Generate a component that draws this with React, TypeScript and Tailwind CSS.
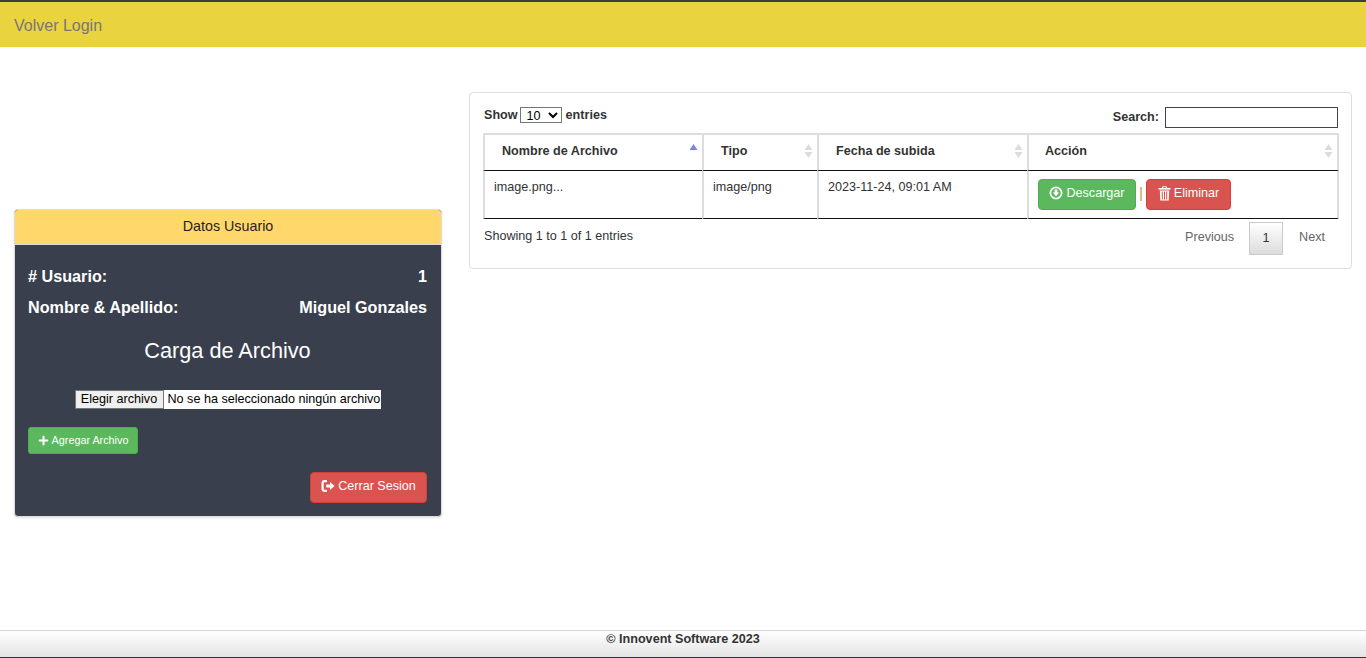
import React from "react";
import { FaPlus } from "react-icons/fa";

const Sort = ({ active = false }: { active?: boolean }) => (
  <svg width="9" height="16" viewBox="0 0 9 16" className="shrink-0">
    <path d="M4.5 1 L8.5 7 H0.5 Z" fill={active ? "#7f85dc" : "#dcdcdc"} />
    {!active && <path d="M4.5 15 L8.5 9 H0.5 Z" fill="#dcdcdc" />}
  </svg>
);

const Th = ({ label, w, active, last }: { label: string; w: string; active?: boolean; last?: boolean }) => (
  <th className={`${w} h-[38px] border-l-2 border-t-2 border-[#dddddd] border-b border-b-[#111111] p-0 text-left align-middle text-[12.6px] font-bold text-[#333333] ${last ? "border-r-2 border-r-[#dddddd]" : ""}`}>
    <div className={`flex items-center justify-between pb-[2px] pr-[4px] ${last ? "pl-[16px]" : "pl-[17px]"}`}>
      <span>{label}</span>
      <Sort active={active} />
    </div>
  </th>
);

const DownloadIcon = () => (
  <svg width="14" height="14" viewBox="0 0 14 14" className="shrink-0">
    <circle cx="7" cy="7" r="5.6" fill="none" stroke="white" strokeWidth="1.7" />
    <path d="M5.6 3.4 H8.4 V6.6 H10.2 L7 10.2 L3.8 6.6 H5.6 Z" fill="white" />
  </svg>
);

const TrashIcon = () => (
  <svg width="13" height="15" viewBox="0 0 13 15" className="shrink-0">
    <path d="M4.5 2 V0.8 H8.5 V2" fill="none" stroke="white" strokeWidth="1" />
    <rect x="0.5" y="2" width="12" height="1.6" fill="white" />
    <path d="M1.8 4.4 H11.2 L10.7 14.5 H2.3 Z" fill="white" />
    <path d="M4.3 5.5 V13.5 M6.5 5.5 V13.5 M8.7 5.5 V13.5" stroke="#d9534f" strokeWidth="1" />
  </svg>
);

const LogoutIcon = () => (
  <svg width="14" height="14" viewBox="0 0 14 14" className="shrink-0">
    <path d="M6 2.2 H3.6 Q1.6 2.2 1.6 4.2 V9.8 Q1.6 11.8 3.6 11.8 H6" fill="none" stroke="white" strokeWidth="2.2" />
    <path d="M5.2 5.6 H9 V3 L13.6 7 L9 11 V8.4 H5.2 Z" fill="white" />
  </svg>
);

export default function App() {
  return (
    <div className="flex h-[658px] flex-col overflow-hidden bg-white font-['Liberation_Sans',Arial,sans-serif] text-[#333333]">
      <header className="flex h-[47px] shrink-0 items-center border-t-2 border-[#3d3d3d] bg-[#e9d33f] pl-[14px] pt-[2px]">
        <a className="text-[16px] text-[#777777]">Volver Login</a>
      </header>

      <main className="flex min-h-0 flex-1 items-start pl-[14px] pr-[14px] pt-[45px]">
        <section className="mt-[117px] w-[428px] shrink-0 overflow-hidden rounded-[4px] border border-[#dddddd] bg-[#3a3f4d] shadow-sm">
          <div className="flex h-[35px] items-center justify-center border-b border-[#dddddd] bg-[#ffd76a] text-[14.3px] text-[#1f1f1f]">
            Datos Usuario
          </div>
          <div className="flex h-[271px] flex-col pl-[13px] pr-[14px] text-white">
            <div className="mt-[21px] flex justify-between text-[16.2px] font-bold leading-[20px]">
              <span>&#35; Usuario:</span>
              <span>1</span>
            </div>
            <div className="mt-[11px] flex justify-between text-[16.2px] font-bold leading-[20px]">
              <span>Nombre &amp; Apellido:</span>
              <span>Miguel Gonzales</span>
            </div>
            <h2 className="mt-[21px] text-center text-[21.7px] font-normal leading-[26px]">Carga de Archivo</h2>
            <div className="mt-[26px] flex justify-center">
              <div className="flex h-[19px] w-[306px] items-center bg-white text-[12.6px] text-black">
                <button className="h-[19px] w-[89px] shrink-0 border border-[#767676] bg-[#efefef] text-center leading-none text-black">
                  Elegir archivo
                </button>
                <span className="ml-[4px] whitespace-nowrap">No se ha seleccionado ningún archivo</span>
              </div>
            </div>
            <div className="mt-[18px]">
              <button className="flex h-[27px] w-[110px] items-center justify-center gap-[3px] rounded-[3px] border border-[#4cae4c] bg-[#5cb85c] text-[10.8px] font-normal text-white">
                <FaPlus className="text-[11px]" />
                <span>Agregar Archivo</span>
              </button>
            </div>
            <div className="mt-[18px] flex justify-end">
              <button className="flex h-[31px] w-[117px] items-center justify-center gap-[3px] rounded-[4px] border border-[#d43f3a] bg-[#d9534f] pb-[3px] text-[12.6px] text-white">
                <LogoutIcon />
                <span>Cerrar Sesion</span>
              </button>
            </div>
          </div>
        </section>

        <section className="ml-[27px] h-[177px] w-[883px] shrink-0 rounded-[4px] border border-[#dddddd] bg-white pl-[13px] pr-[12px]">
          <div className="ml-[1px] mr-[1px] flex h-[40px] items-start justify-between text-[12.6px] font-bold text-[#333333]">
            <label className="mt-[13px] flex items-center leading-[18px]">
              Show
              <select className="ml-[2px] mr-[4px] h-[16px] w-[42px] rounded-none border border-[#767676] bg-white pl-[2px] text-[12.6px] font-normal text-black">
                <option>10</option>
              </select>
              entries
            </label>
            <label className="mt-[14px] flex items-center">
              <span className="-mt-[1px]">Search:</span>
              <input className="ml-[6px] h-[21px] w-[173px] border border-[#444444] bg-white" />
            </label>
          </div>
          <table className="w-[856px] table-fixed border-separate border-spacing-0">
            <thead>
              <tr>
                <Th label="Nombre de Archivo" w="w-[219px]" active />
                <Th label="Tipo" w="w-[115px]" />
                <Th label="Fecha de subida" w="w-[210px]" />
                <Th label="Acción" w="w-[312px]" last />
              </tr>
            </thead>
            <tbody>
              <tr className="text-[12.6px] text-[#333333]">
                <td className="h-[48px] border-l-2 border-b border-[#dddddd] border-b-[#111111] px-[9px] pt-[7px] align-top">image.png...</td>
                <td className="border-l-2 border-b border-[#dddddd] border-b-[#111111] px-[9px] pt-[7px] align-top">image/png</td>
                <td className="border-l-2 border-b border-[#dddddd] border-b-[#111111] px-[9px] pt-[7px] align-top">2023-11-24, 09:01 AM</td>
                <td className="border-x-2 border-b border-[#dddddd] border-b-[#111111] px-[9px] align-top">
                  <div className="mt-[8px] flex items-center">
                    <button className="flex h-[31px] w-[98px] items-center justify-center gap-[3px] rounded-[4px] border border-[#4cae4c] bg-[#5cb85c] pb-[3px] text-[12.6px] text-white">
                      <DownloadIcon />
                      Descargar
                    </button>
                    <span className="w-[10px] pb-[3px] text-center text-[14px] leading-none text-[#d58a3a]">|</span>
                    <button className="flex h-[31px] w-[85px] items-center justify-center gap-[3px] rounded-[4px] border border-[#d43f3a] bg-[#d9534f] pb-[3px] text-[12.6px] text-white">
                      <TrashIcon />
                      Eliminar
                    </button>
                  </div>
                </td>
              </tr>
            </tbody>
          </table>
          <div className="flex items-start justify-between text-[12.6px]">
            <span className="ml-[1px] mt-[8px] text-[#333333]">Showing 1 to 1 of 1 entries</span>
            <nav className="mt-[3px] flex items-center text-[#666666]">
              <span className="px-[15px] pb-[2px]">Previous</span>
              <span className="flex h-[33px] w-[34px] items-center justify-center border border-[#cacaca] bg-gradient-to-b from-white to-[#dcdcdc] text-[#333333]">1</span>
              <span className="pl-[16px] pr-[14px] pb-[2px]">Next</span>
            </nav>
          </div>
        </section>
      </main>

      <footer className="h-[28px] shrink-0 border-t border-[#d5d5d5] border-b border-b-[#333333] bg-gradient-to-b from-white to-[#e4e4e4] text-center text-[12.6px] font-bold leading-[16px] text-[#333333]">
        © Innovent Software 2023
      </footer>
    </div>
  );
}
